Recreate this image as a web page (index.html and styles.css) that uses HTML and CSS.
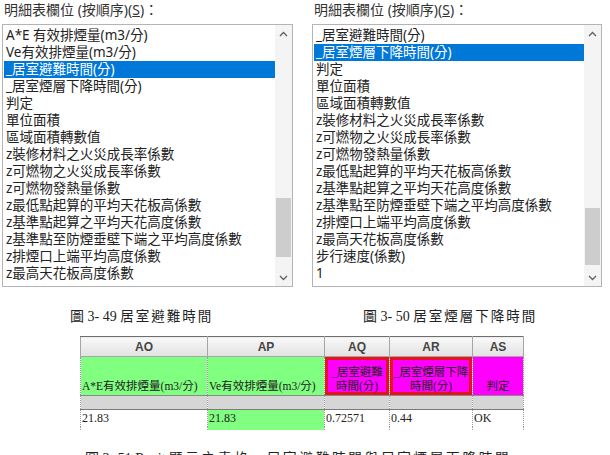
FILE: index.html
```html
<!DOCTYPE html>
<html lang="zh-Hant">
<head>
    <meta charset="UTF-8">
    <meta name="viewport" content="width=device-width, initial-scale=1.0">
    <title>明細表欄位</title>
    <link rel="stylesheet" href="styles.css">
</head>
<body>

    <div class="dialogs">
        <div class="panel panel-left">
            <div class="field-label">明細表欄位 (按順序)(<u>S</u>)：</div>
            <div class="listbox">
                <ul class="items">
                    <li>A*E 有效排煙量(m3/分)</li>
                    <li>Ve有效排煙量(m3/分)</li>
                    <li class="selected">_居室避難時間(分)</li>
                    <li>_居室煙層下降時間(分)</li>
                    <li>判定</li>
                    <li>單位面積</li>
                    <li>區域面積轉數值</li>
                    <li>z裝修材料之火災成長率係數</li>
                    <li>z可燃物之火災成長率係數</li>
                    <li>z可燃物發熱量係數</li>
                    <li>z最低點起算的平均天花板高係數</li>
                    <li>z基準點起算之平均天花高度係數</li>
                    <li>z基準點至防煙垂壁下端之平均高度係數</li>
                    <li>z排煙口上端平均高度係數</li>
                    <li>z最高天花板高度係數</li>
                </ul>
                <div class="scrollbar">
                    <span class="arrow"><svg width="9" height="6" viewBox="0 0 9 6"><path d="M1 5 L4.5 1.5 L8 5" fill="none" stroke="#606060" stroke-width="1.3"/></svg></span>
                    <div class="track"><div class="thumb" style="margin-top: 156px; height: 59px;"></div></div>
                    <span class="arrow"><svg width="9" height="6" viewBox="0 0 9 6"><path d="M1 1 L4.5 4.5 L8 1" fill="none" stroke="#606060" stroke-width="1.3"/></svg></span>
                </div>
            </div>
        </div>

        <div class="panel panel-right">
            <div class="field-label">明細表欄位 (按順序)(<u>S</u>)：</div>
            <div class="listbox">
                <ul class="items">
                    <li>_居室避難時間(分)</li>
                    <li class="selected">_居室煙層下降時間(分)</li>
                    <li>判定</li>
                    <li>單位面積</li>
                    <li>區域面積轉數值</li>
                    <li>z裝修材料之火災成長率係數</li>
                    <li>z可燃物之火災成長率係數</li>
                    <li>z可燃物發熱量係數</li>
                    <li>z最低點起算的平均天花板高係數</li>
                    <li>z基準點起算之平均天花高度係數</li>
                    <li>z基準點至防煙垂壁下端之平均高度係數</li>
                    <li>z排煙口上端平均高度係數</li>
                    <li>z最高天花板高度係數</li>
                    <li>步行速度(係數)</li>
                    <li>1</li>
                </ul>
                <div class="scrollbar">
                    <span class="arrow"><svg width="9" height="6" viewBox="0 0 9 6"><path d="M1 5 L4.5 1.5 L8 5" fill="none" stroke="#606060" stroke-width="1.3"/></svg></span>
                    <div class="track"><div class="thumb" style="margin-top: 166px; height: 57px;"></div></div>
                    <span class="arrow"><svg width="9" height="6" viewBox="0 0 9 6"><path d="M1 1 L4.5 4.5 L8 1" fill="none" stroke="#606060" stroke-width="1.3"/></svg></span>
                </div>
            </div>
        </div>
    </div>

    <div class="captions">
        <p class="caption cap-left">圖 3- 49 <span class="cjk">居室避難時間</span></p>
        <p class="caption">圖 3- 50 <span class="cjk">居室煙層下降時間</span></p>
    </div>

    <table class="sheet">
        <colgroup>
            <col class="col-ao">
            <col class="col-ap">
            <col class="col-aq">
            <col class="col-ar">
            <col class="col-as">
        </colgroup>
        <tr class="head">
            <th>AO</th>
            <th>AP</th>
            <th>AQ</th>
            <th>AR</th>
            <th>AS</th>
        </tr>
        <tr class="names">
            <td class="green">A*E有效排煙量(m3/分)</td>
            <td class="green">Ve有效排煙量(m3/分)</td>
            <td class="pink center marked">_居室避難<br>時間(分)</td>
            <td class="pink center marked">_居室煙層下降<br>時間(分)</td>
            <td class="pink center">判定</td>
        </tr>
        <tr class="band">
            <td></td><td></td><td></td><td></td><td></td>
        </tr>
        <tr class="data">
            <td>21.83</td>
            <td class="green">21.83</td>
            <td>0.72571</td>
            <td>0.44</td>
            <td>OK</td>
        </tr>
        <tr class="tail">
            <td></td><td class="green"></td><td></td><td></td><td></td>
        </tr>
    </table>

    <p class="caption caption-main">圖 3- 51 Revit <span class="cjk">顯示之表格，居室避難時間與居室煙層下降時間</span></p>

</body>
</html>
```

FILE: styles.css
```css
body {
    margin: 0;
    background-color: #ffffff;
    font-family: "Noto Sans", "Noto Sans CJK TC", sans-serif;
    color: #1e1e1e;
}
.dialogs {
    display: flex;
    gap: 19px;
    padding-left: 2px;
}
.panel-left {
    width: 291px;
}
.panel-right {
    width: 290px;
}
.field-label {
    height: 24px;
    line-height: 20px;
    font-size: 14px;
    padding-left: 2px;
    color: #333333;
}
.listbox {
    display: flex;
    height: 263px;
    box-sizing: border-box;
    border: 1px solid #b4b4b4;
    background-color: #ffffff;
}
.items {
    flex: 1;
    list-style: none;
    margin: 0;
    padding: 2px 0 0 1px;
    overflow: hidden;
}
.items li {
    height: 17px;
    line-height: 17px;
    font-size: 13.5px;
    padding-left: 2px;
    white-space: nowrap;
    color: #222222;
}
.items li.selected {
    background-color: #0078d7;
    color: #ffffff;
}
.scrollbar {
    width: 17px;
    display: flex;
    flex-direction: column;
    background-color: #f4f4f4;
}
.arrow {
    height: 17px;
    display: flex;
    align-items: center;
    justify-content: center;
}
.track {
    flex: 1;
}
.thumb {
    background-color: #cdcdcd;
    margin-left: 1px;
    margin-right: 1px;
}
.captions {
    display: flex;
    margin-top: 20px;
    padding-left: 70px;
}
.caption {
    margin: 0;
    font-family: "Liberation Serif", "Noto Sans CJK TC", serif;
    font-size: 14px;
    line-height: 20px;
    color: #222222;
}
.caption .cjk {
    letter-spacing: 2px;
    font-size: 13.5px;
}
.cap-left {
    width: 293px;
}
.sheet {
    margin-top: 9px;
    margin-left: 80px;
    border-collapse: collapse;
    table-layout: fixed;
    width: 443px;
}
.col-ao { width: 127px; }
.col-ap { width: 117px; }
.col-aq { width: 65px; }
.col-ar { width: 83px; }
.col-as { width: 51px; }
.sheet th {
    height: 19px;
    padding: 0;
    background: linear-gradient(#f8f8f8, #e2e2e2);
    border: 1px solid #a6a6a6;
    border-top-color: #6e6e6e;
    font-family: "Liberation Sans", sans-serif;
    font-size: 12px;
    font-weight: bold;
    color: #444444;
}
.sheet td {
    padding: 0 1px;
    border-left: 1px dotted #9a9a9a;
    border-right: 1px dotted #9a9a9a;
    font-family: "Liberation Serif", "Noto Sans CJK TC", serif;
    font-size: 11.5px;
    color: #222222;
    white-space: nowrap;
    overflow: hidden;
}
.names td {
    height: 36px;
    vertical-align: bottom;
    padding-bottom: 2px;
    line-height: 14px;
}
.green {
    background-color: #80ff80;
}
.pink {
    background-color: #ff00ff;
}
.center {
    text-align: center;
}
.marked {
    box-shadow: inset 0 0 0 3px #e4141c;
}
.band td {
    height: 13px;
    background-color: #d6d6d6;
    border-top: 1px solid #8a8a8a;
}
.data td {
    height: 17px;
    border-top: 1px solid #7a7a7a;
    vertical-align: top;
    font-size: 12px;
    line-height: 16px;
}
.tail td {
    height: 3px;
    padding: 0;
}
.caption-main {
    margin-top: 19px;
    margin-left: 85px;
}
.caption-main .cjk {
    letter-spacing: 2.8px;
}
```
